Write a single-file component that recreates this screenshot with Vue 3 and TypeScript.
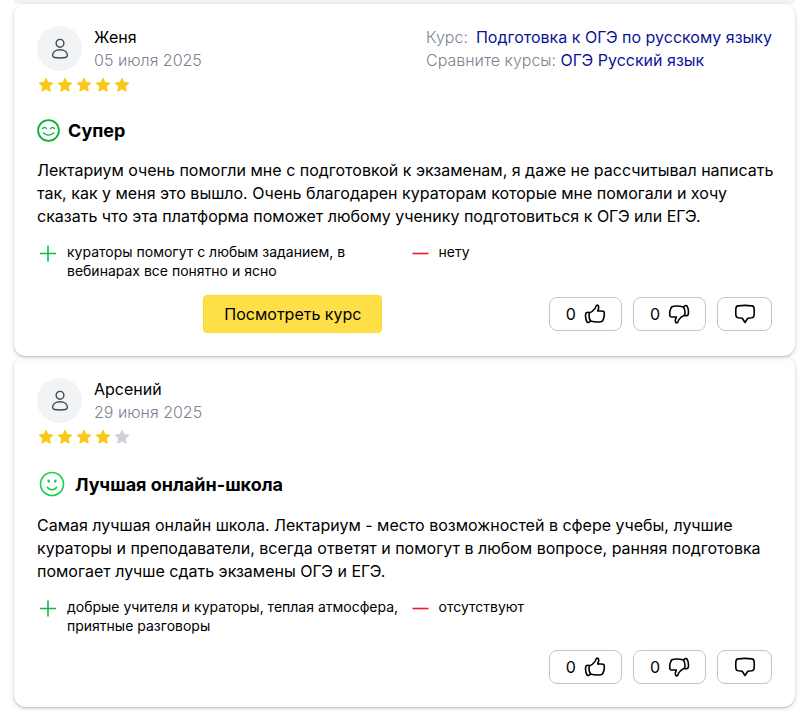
<script setup lang="ts">
type Mood = 'delighted' | 'happy'

interface Review {
  id: number
  author: string
  date: string
  rating: number
  mood: Mood
  title: string
  text: string
  pros: string
  cons: string
  likes: number
  dislikes: number
  course?: string
  compare?: string
}

const reviews: Review[] = [
  {
    id: 1,
    author: 'Женя',
    date: '05 июля 2025',
    rating: 5,
    mood: 'delighted',
    title: 'Супер',
    text: 'Лектариум очень помогли мне с подготовкой к экзаменам, я даже не рассчитывал написать так, как у меня это вышло. Очень благодарен кураторам которые мне помогали и хочу сказать что эта платформа поможет любому ученику подготовиться к ОГЭ или ЕГЭ.',
    pros: 'кураторы помогут с любым заданием, в вебинарах все понятно и ясно',
    cons: 'нету',
    likes: 0,
    dislikes: 0,
    course: 'Подготовка к ОГЭ по русскому языку',
    compare: 'ОГЭ Русский язык',
  },
  {
    id: 2,
    author: 'Арсений',
    date: '29 июня 2025',
    rating: 4,
    mood: 'happy',
    title: 'Лучшая онлайн-школа',
    text: 'Самая лучшая онлайн школа. Лектариум - место возможностей в сфере учебы, лучшие кураторы и преподаватели, всегда ответят и помогут в любом вопросе, ранняя подготовка помогает лучше сдать экзамены ОГЭ и ЕГЭ.',
    pros: 'добрые учителя и кураторы, теплая атмосфера, приятные разговоры',
    cons: 'отсутствуют',
    likes: 0,
    dislikes: 0,
  },
]
</script>

<template>
  <main class="page">
    <div class="previous"></div>
    <article v-for="r in reviews" :key="r.id" class="card" :class="r.mood">
      <header class="head">
        <div class="avatar">
          <svg width="18" height="22" viewBox="0 0 18 22" fill="none" stroke="#3f4759" stroke-width="1.4">
            <circle cx="9" cy="5.3" r="3.9" />
            <path d="M1.6 17.6C1.6 14.2 4.6 11.7 9 11.7s7.4 2.5 7.4 5.9c0 1.3-.8 1.7-2 1.9-3.5.6-7.3.6-10.8 0-1.2-.2-2-.6-2-1.9Z" />
          </svg>
        </div>
        <div class="who">
          <div>{{ r.author }}</div>
          <time class="muted">{{ r.date }}</time>
        </div>
        <div v-if="r.course" class="course">
          <div><span class="muted label">Курс:</span><a href="#">{{ r.course }}</a></div>
          <div><span class="muted">Сравните курсы: </span><a href="#">{{ r.compare }}</a></div>
        </div>
      </header>

      <div class="stars" role="img" :aria-label="`${r.rating} / 5`">
        <svg v-for="n in 5" :key="n" :class="{ off: n > r.rating }" width="16" height="16" viewBox="0 0 16 16">
          <path d="M8 1.3l1.9 4.2 4.9.6-3.5 3.2.9 4.9L8 11.900l-4.200 2.300.9-4.900L1.200 6.100l4.900-.6Z" stroke-width="1" stroke-linejoin="round" />
        </svg>
      </div>

      <div class="heading">
        <svg v-if="r.mood === 'delighted'" width="23" height="23" viewBox="0 0 23 23" fill="none" stroke="#0bb03a" stroke-linecap="round">
          <circle cx="11.5" cy="11.5" r="10.4" stroke-width="1.8" />
          <path d="M5.6 9.600c.8-1.600 2.900-1.600 3.800 0M13.600 9.600c.9-1.600 3-1.600 3.800 0M6.400 13.900c2.600 3 7.600 3 10.200 0" stroke-width="1.4" />
        </svg>
        <svg v-else width="26" height="26" viewBox="0 0 26 26" fill="none" stroke="#16cf52" stroke-linecap="round">
          <circle cx="13" cy="13" r="11.500" stroke-width="1.6" />
          <path d="M8.200 16.200c2.300 3.300 7.300 3.300 9.600 0" stroke-width="1.5" />
          <path d="M9.700 9.600v.9M16.300 9.600v.9" stroke-width="2.4" />
        </svg>
        <h2>{{ r.title }}</h2>
      </div>

      <p class="text">{{ r.text }}</p>

      <div class="points">
        <div class="point">
          <svg width="22" height="22" viewBox="0 0 22 22" stroke="#0fbb3f" stroke-width="1.6"><path d="M3 11.500h16M11 3.500v16" /></svg>
          <p>{{ r.pros }}</p>
        </div>
        <div class="point">
          <svg width="22" height="22" viewBox="0 0 22 22" stroke="#ee1c25" stroke-width="1.6"><path d="M3.500 11.500h16" /></svg>
          <p>{{ r.cons }}</p>
        </div>
      </div>

      <footer class="actions">
        <a v-if="r.course" class="cta" href="#">Посмотреть курс</a>
        <div class="votes">
          <button type="button" class="vote">
            {{ r.likes }}
            <svg class="thumb" width="22" height="20" viewBox="0 0 22 20">
              <path d="M5.500 8.700c2.500-.7 4.200-2.300 5.600-4.300.8-1.200.6-2.800 1.700-3.200 1.300-.2 2 1 1.900 2.400-.1 1.300-.7 2.300-1 3.300 2 .3 4.100-.2 5.600.4 1.100.5 1.200 1.600.8 2.400.4.900.4 2-.1 2.800.1 1-.1 1.800-.7 2.500-.2 1.600-1.100 2.600-2.900 2.800-3.300.5-6.900.1-9.900-.8" />
              <path d="M1.900 9.200c1-.8 2.800-1.100 3.600-.5-.9 2.800-.6 5.600 1 8.300-.6 1.200-2.300 1.800-3.300 1.200-1.700-2.700-2-6.100-1.300-9Z" />
            </svg>
          </button>
          <button type="button" class="vote">
            {{ r.dislikes }}
            <svg class="thumb down" width="22" height="20" viewBox="0 0 22 20">
              <path d="M5.500 8.700c2.500-.7 4.200-2.300 5.600-4.300.8-1.200.6-2.800 1.700-3.200 1.300-.2 2 1 1.900 2.400-.1 1.300-.7 2.300-1 3.300 2 .3 4.100-.2 5.600.4 1.100.5 1.200 1.600.8 2.400.4.900.4 2-.1 2.800.1 1-.1 1.800-.7 2.500-.2 1.600-1.100 2.600-2.900 2.800-3.300.5-6.900.1-9.900-.8" />
              <path d="M1.900 9.200c1-.8 2.800-1.100 3.600-.5-.9 2.800-.6 5.600 1 8.300-.6 1.200-2.300 1.800-3.300 1.200-1.700-2.700-2-6.100-1.300-9Z" />
            </svg>
          </button>
          <button type="button" class="vote" aria-label="Комментировать">
            <svg width="22" height="20" viewBox="0 0 22 20">
              <path d="M4.200 1.900c4.500-.7 9.100-.7 13.600 0 1.400.2 2.200 1.200 2.300 2.600.2 2.200.2 4.600 0 6.800-.1 1.500-1 2.300-2.400 2.500l-3.900.4L11 18.500l-2.800-4.300-3.900-.4c-1.400-.2-2.300-1-2.400-2.500-.2-2.200-.2-4.600 0-6.800.1-1.400.9-2.400 2.300-2.600Z" />
            </svg>
          </button>
        </div>
      </footer>
    </article>
  </main>
</template>

<style>
body {
  margin: 0;
  background: #fff;
}
</style>

<style scoped>
.page {
  padding: 0 5px 4px 14px;
  font: 16px/23px Inter, "Open Sans", sans-serif;
  color: #000;
}

.previous {
  height: 4px;
  border-radius: 0 0 12px 12px;
  background: #f1f2f4;
}

.card {
  position: relative;
  padding: 22px 23px 23px;
  border-radius: 12px;
  background: #fff;
  box-shadow: 0 1px 2px rgb(0 0 0 / 20%), 0 2px 6px rgb(0 0 0 / 10%);
}

.card.delighted {
  z-index: 1;
}

.head {
  display: flex;
  gap: 12px;
}

.avatar {
  display: grid;
  place-items: center;
  width: 45px;
  height: 45px;
  border-radius: 50%;
  background: #f2f3f5;
}

.who {
  flex: 1;
}

.course {
  white-space: nowrap;
}

.label {
  margin-right: 8px;
}

.muted {
  color: #7b8391;
  font-weight: 300;
}

.course a {
  color: #0c1399;
  text-decoration: none;
}

.stars {
  display: flex;
  gap: 3px;
  margin: 5px 0 0 1px;
}

.stars path {
  fill: #fac815;
  stroke: #fac815;
}

.stars .off path {
  fill: #cdd2da;
  stroke: #cdd2da;
}

.heading {
  display: flex;
  align-items: center;
  gap: 8px;
  height: 28px;
  margin: 23px 0 15px;
}

.happy .heading {
  gap: 10px;
  height: 32px;
  margin-bottom: 14px;
  padding-left: 2px;
}

h2 {
  margin: 0;
  font-size: 18px;
  font-weight: 700;
}

p {
  margin: 0;
}

.text {
  margin-right: -8px;
}

.points {
  display: grid;
  grid-template-columns: 1fr 1fr;
  gap: 8px;
  margin: 14px 0 15px;
}

.point {
  display: flex;
  gap: 8px;
  font-size: 14px;
  line-height: 19px;
}

.point svg {
  flex: none;
}

.actions {
  display: grid;
  grid-template-columns: 1fr auto;
  align-items: center;
}

.cta {
  justify-self: center;
  padding: 7px 20px;
  border: 1px solid #fcd92b;
  border-radius: 4px;
  background: #fedf48;
  color: #000;
  line-height: 22px;
  text-decoration: none;
}

.votes {
  grid-column: 2;
  display: flex;
  gap: 11px;
}

.vote {
  display: flex;
  align-items: center;
  gap: 8px;
  height: 34px;
  padding: 0 15px 0 16px;
  border: 1px solid #c0c6d0;
  border-radius: 8px;
  background: #fff;
  color: #000;
  font: inherit;
}

.vote svg {
  fill: none;
  stroke: #000;
  stroke-width: 1.6;
  stroke-linejoin: round;
  stroke-linecap: round;
}

.thumb.down {
  transform: rotate(180deg);
}
</style>
